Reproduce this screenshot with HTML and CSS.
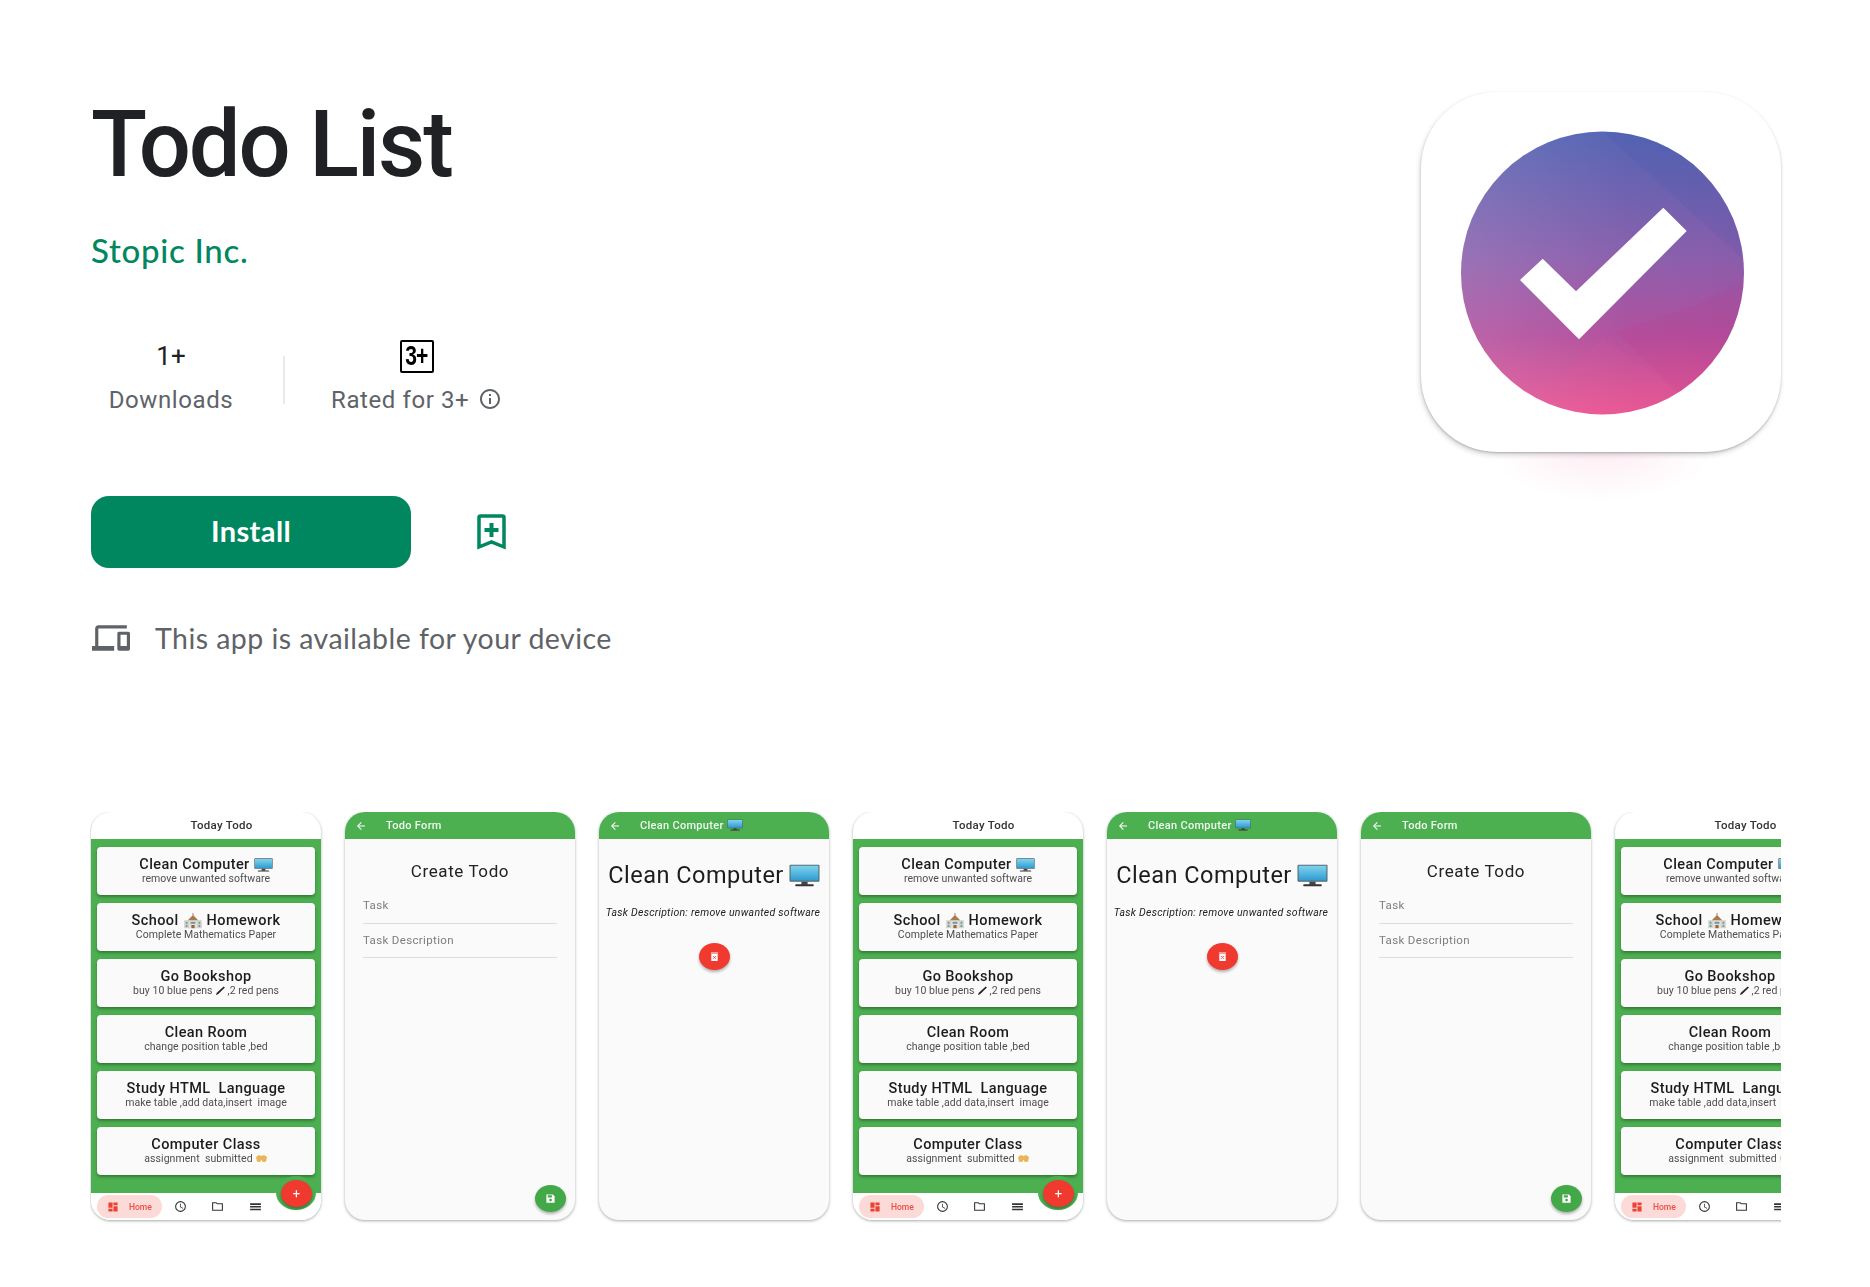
FILE: index.html
```html
<!DOCTYPE html>
<html lang="en">
<head>
<meta charset="utf-8">
<title>Todo List</title>
<link rel="stylesheet" href="styles.css">
</head>
<body>
<svg class="defs" aria-hidden="true">
  <defs>
    <linearGradient id="scr" x1="0" y1="0" x2="0" y2="1"><stop offset="0" stop-color="#7fd3ee"/><stop offset="1" stop-color="#2f9bd0"/></linearGradient>
    <linearGradient id="disc" x1="0" y1="0" x2="0" y2="1"><stop offset="0" stop-color="#5161b2"/><stop offset=".45" stop-color="#8a5dab"/><stop offset=".72" stop-color="#b14d9c"/><stop offset="1" stop-color="#ea5492"/></linearGradient>
    <linearGradient id="sheen" x1="0" y1="0" x2="1" y2="0"><stop offset="0" stop-color="#fff" stop-opacity=".13"/><stop offset=".6" stop-color="#fff" stop-opacity=".02"/><stop offset="1" stop-color="#fff" stop-opacity="0"/></linearGradient>
    <clipPath id="discClip"><circle cx="181.5" cy="181" r="141.5"/></clipPath>
    <symbol id="monitor" viewBox="0 0 30 22"><rect x="0.5" y="0.5" width="29" height="16.5" rx="1" fill="#55636b"/><rect x="1.5" y="1.5" width="27" height="14.500" fill="url(#scr)"/><rect x="12" y="17" width="6" height="3" fill="#444"/><rect x="6" y="19.500" width="18" height="1.800" rx=".9" fill="#333"/></symbol>
    <symbol id="school" viewBox="0 0 24 20"><rect x="1" y="9" width="22" height="10" fill="#d8d2c4"/><path d="M7 9 12 3l5 6v10H7z" fill="#e8dfcf"/><path d="M5.500 9 12 2.500 18.500 9z" fill="#a9794f"/><rect x="11.500" y="0" width="1" height="3" fill="#c0463c"/><rect x="3" y="11" width="2" height="2.500" fill="#5e9cc7"/><rect x="19" y="11" width="2" height="2.500" fill="#5e9cc7"/><rect x="3" y="15" width="2" height="2.500" fill="#5e9cc7"/><rect x="19" y="15" width="2" height="2.500" fill="#5e9cc7"/><rect x="9" y="11" width="6" height="2.500" fill="#5e9cc7"/><rect x="10" y="15" width="4" height="4" fill="#8c6b4a"/></symbol>
    <symbol id="pen" viewBox="0 0 12 12"><path d="M1 11 2 8.500 9.500 1.500 10.800 2.700 3.300 10z" fill="#222"/></symbol>
    <symbol id="hands" viewBox="0 0 14 10"><path d="M1 3.500C3 1 6 1 7 2.500 8 1 11 1 13 3.500L12 8.500 8.500 9 7 6.500 5.500 9 2 8.500z" fill="#e8b658"/></symbol>
    <symbol id="back" viewBox="0 0 24 24"><path d="M20 11H7.830l5.590-5.590L12 4l-8 8 8 8 1.410-1.410L7.830 13H20z"/></symbol>
    <symbol id="grid" viewBox="0 0 24 24"><path d="M1 1h10v13H1zM13 1h10v7H13zM13 10h10v13H13zM1 16h10v7H1z"/></symbol>
    <symbol id="clock" viewBox="0 0 24 24"><path d="M12 2a10 10 0 1 0 0 20 10 10 0 0 0 0-20zm0 18a8 8 0 1 1 0-16 8 8 0 0 1 0 16zm.5-13H11v6l5.250 3.150.750-1.230-4.500-2.670z"/></symbol>
    <symbol id="folder" viewBox="0 0 24 24"><path d="M10 4H2v16h20V6H12zm10 14H4V6h5.200l2 2H20z"/></symbol>
    <symbol id="menu" viewBox="0 0 24 24"><path d="M2 6h20v3H2zM2 11h20v3H2zM2 16h20v3H2z"/></symbol>
    <symbol id="trash" viewBox="0 0 24 24"><path d="M5 6h14v16H5zM4 3h16v2H4z"/><path d="m9 11 6 6m0-6-6 6" stroke="#f44336" stroke-width="2"/></symbol>
    <symbol id="save" viewBox="0 0 24 24"><path d="M17 3H3v18h18V7zM6 5h9v5H6z"/><circle cx="12" cy="15.500" r="3" fill="#43a847"/></symbol>
  </defs>
</svg>

<main class="page">
  <section class="hero">
    <div class="hero-info">
      <h1 class="app-title">Todo List</h1>
      <a class="developer">Stopic Inc.</a>
      <div class="stats">
        <div class="stat stat-downloads">
          <div class="stat-top">1+</div>
          <div class="stat-label">Downloads</div>
        </div>
        <div class="stat-divider"></div>
        <div class="stat stat-rating">
          <div class="stat-top"><span class="rating-box"><span class="rating-text">3+</span></span></div>
          <div class="stat-label">Rated for 3+
            <svg class="info-icon" viewBox="0 0 24 24"><path d="M11 7h2v2h-2zm0 4h2v6h-2zm1-9C6.480 2 2 6.480 2 12s4.480 10 10 10 10-4.480 10-10S17.520 2 12 2zm0 18c-4.410 0-8-3.590-8-8s3.590-8 8-8 8 3.590 8 8-3.590 8-8 8z"/></svg>
          </div>
        </div>
      </div>
      <div class="actions">
        <button class="install">Install</button>
        <svg class="bookmark" viewBox="0 0 29 37"><path d="M3.500 2h22a1.500 1.500 0 0 1 1.500 1.500v29.500L14.500 28 2 33V3.500A1.500 1.500 0 0 1 3.500 2z" fill="none" stroke="#01875f" stroke-width="3.500"/><path d="M12.500 9h4v5h5v4h-5v5h-4v-5h-5v-4h5z" fill="#01875f"/></svg>
      </div>
      <div class="device-note">
        <svg class="device-icon" viewBox="0 0 24 24"><path d="M4 6h18V4H4c-1.100 0-2 .9-2 2v11H0v3h14v-3H4V6zm19 2h-6c-.55 0-1 .45-1 1v10c0 .55.45 1 1 1h6c.55 0 1-.45 1-1V9c0-.55-.45-1-1-1zm-1 9h-4v-7h4v7z"/></svg>
        <span>This app is available for your device</span>
      </div>
    </div>
    <div class="app-icon">
      <svg viewBox="0 0 360 360" class="app-icon-art">
        <circle cx="181.500" cy="181" r="141.500" fill="url(#disc)"/>
        <g clip-path="url(#discClip)">
          <rect x="40" y="40" width="283" height="283" fill="url(#sheen)"/>
          <path d="M182 40 320 165 345 40z" fill="#3f57ad" opacity=".13"/>
          <path d="M195 240 262 305 330 240 330 185 270 215z" fill="#c8327f" opacity=".1"/>
          <path d="M130 300 182 245 262 305 182 330z" fill="#f0649f" opacity=".08"/>
        </g>
        <path d="M242.300 115.700 265.700 139 158 247.300 99 188 121.700 166.700 155 199.300z" fill="#fff"/>
      </svg>
    </div>
  </section>

  <section class="shots">
    <div class="phone">
      <div class="plain-bar">Today Todo</div>
      <div class="board">
        <div class="card"><div class="card-title">Clean Computer <svg class="emoji e-monitor"><use href="#monitor"/></svg></div><div class="card-sub">remove unwanted software</div></div>
        <div class="card"><div class="card-title">School <svg class="emoji e-school"><use href="#school"/></svg> Homework</div><div class="card-sub">Complete Mathematics Paper</div></div>
        <div class="card"><div class="card-title">Go Bookshop</div><div class="card-sub">buy 10 blue pens <svg class="emoji e-pen"><use href="#pen"/></svg>,2 red pens</div></div>
        <div class="card"><div class="card-title">Clean Room</div><div class="card-sub">change position table ,bed</div></div>
        <div class="card"><div class="card-title">Study HTML&nbsp; Language</div><div class="card-sub">make table ,add data,insert&nbsp; image</div></div>
        <div class="card"><div class="card-title">Computer Class</div><div class="card-sub">assignment&nbsp; submitted <svg class="emoji e-hands"><use href="#hands"/></svg></div></div>
      </div>
      <nav class="tabs">
        <div class="tab-home"><svg class="tab-grid"><use href="#grid"/></svg><span>Home</span></div>
        <svg class="tab-icon i-clock"><use href="#clock"/></svg>
        <svg class="tab-icon i-folder"><use href="#folder"/></svg>
        <svg class="tab-icon i-menu"><use href="#menu"/></svg>
      </nav>
      <div class="notch"></div>
      <div class="fab fab-add">+</div>
    </div>

    <div class="phone phone-light">
      <div class="green-bar"><svg class="back"><use href="#back"/></svg><span>Todo Form</span></div>
      <div class="form">
        <div class="form-title">Create Todo</div>
        <div class="field">Task</div>
        <div class="field">Task Description</div>
      </div>
      <div class="fab fab-save"><svg class="fab-glyph"><use href="#save"/></svg></div>
    </div>

    <div class="phone phone-light">
      <div class="green-bar"><svg class="back"><use href="#back"/></svg><span>Clean Computer <svg class="emoji e-monitor-s"><use href="#monitor"/></svg></span></div>
      <div class="detail">
        <div class="detail-title">Clean Computer <svg class="emoji e-monitor-l"><use href="#monitor"/></svg></div>
        <div class="detail-desc">Task Description: remove unwanted software</div>
        <div class="fab fab-delete"><svg class="fab-glyph"><use href="#trash"/></svg></div>
      </div>
    </div>

    <div class="phone">
      <div class="plain-bar">Today Todo</div>
      <div class="board">
        <div class="card"><div class="card-title">Clean Computer <svg class="emoji e-monitor"><use href="#monitor"/></svg></div><div class="card-sub">remove unwanted software</div></div>
        <div class="card"><div class="card-title">School <svg class="emoji e-school"><use href="#school"/></svg> Homework</div><div class="card-sub">Complete Mathematics Paper</div></div>
        <div class="card"><div class="card-title">Go Bookshop</div><div class="card-sub">buy 10 blue pens <svg class="emoji e-pen"><use href="#pen"/></svg>,2 red pens</div></div>
        <div class="card"><div class="card-title">Clean Room</div><div class="card-sub">change position table ,bed</div></div>
        <div class="card"><div class="card-title">Study HTML&nbsp; Language</div><div class="card-sub">make table ,add data,insert&nbsp; image</div></div>
        <div class="card"><div class="card-title">Computer Class</div><div class="card-sub">assignment&nbsp; submitted <svg class="emoji e-hands"><use href="#hands"/></svg></div></div>
      </div>
      <nav class="tabs">
        <div class="tab-home"><svg class="tab-grid"><use href="#grid"/></svg><span>Home</span></div>
        <svg class="tab-icon i-clock"><use href="#clock"/></svg>
        <svg class="tab-icon i-folder"><use href="#folder"/></svg>
        <svg class="tab-icon i-menu"><use href="#menu"/></svg>
      </nav>
      <div class="notch"></div>
      <div class="fab fab-add">+</div>
    </div>

    <div class="phone phone-light">
      <div class="green-bar"><svg class="back"><use href="#back"/></svg><span>Clean Computer <svg class="emoji e-monitor-s"><use href="#monitor"/></svg></span></div>
      <div class="detail">
        <div class="detail-title">Clean Computer <svg class="emoji e-monitor-l"><use href="#monitor"/></svg></div>
        <div class="detail-desc">Task Description: remove unwanted software</div>
        <div class="fab fab-delete"><svg class="fab-glyph"><use href="#trash"/></svg></div>
      </div>
    </div>

    <div class="phone phone-light">
      <div class="green-bar"><svg class="back"><use href="#back"/></svg><span>Todo Form</span></div>
      <div class="form">
        <div class="form-title">Create Todo</div>
        <div class="field">Task</div>
        <div class="field">Task Description</div>
      </div>
      <div class="fab fab-save"><svg class="fab-glyph"><use href="#save"/></svg></div>
    </div>

    <div class="phone">
      <div class="plain-bar">Today Todo</div>
      <div class="board">
        <div class="card"><div class="card-title">Clean Computer <svg class="emoji e-monitor"><use href="#monitor"/></svg></div><div class="card-sub">remove unwanted software</div></div>
        <div class="card"><div class="card-title">School <svg class="emoji e-school"><use href="#school"/></svg> Homework</div><div class="card-sub">Complete Mathematics Paper</div></div>
        <div class="card"><div class="card-title">Go Bookshop</div><div class="card-sub">buy 10 blue pens <svg class="emoji e-pen"><use href="#pen"/></svg>,2 red pens</div></div>
        <div class="card"><div class="card-title">Clean Room</div><div class="card-sub">change position table ,bed</div></div>
        <div class="card"><div class="card-title">Study HTML&nbsp; Language</div><div class="card-sub">make table ,add data,insert&nbsp; image</div></div>
        <div class="card"><div class="card-title">Computer Class</div><div class="card-sub">assignment&nbsp; submitted <svg class="emoji e-hands"><use href="#hands"/></svg></div></div>
      </div>
      <nav class="tabs">
        <div class="tab-home"><svg class="tab-grid"><use href="#grid"/></svg><span>Home</span></div>
        <svg class="tab-icon i-clock"><use href="#clock"/></svg>
        <svg class="tab-icon i-folder"><use href="#folder"/></svg>
        <svg class="tab-icon i-menu"><use href="#menu"/></svg>
      </nav>
      <div class="notch"></div>
      <div class="fab fab-add">+</div>
    </div>
  </section>
</main>
</body>
</html>
```
FILE: styles.css
```css
* { box-sizing: border-box; }
html, body { margin: 0; background: #fff; }
body { font-family: Roboto, "Liberation Sans", sans-serif; color: #202124; width: 1870px; height: 1287px; overflow: hidden; }
.defs { width: 0; height: 0; position: absolute; }
.page { padding: 92px 89px 0 91px; }

.hero { display: flex; justify-content: space-between; align-items: flex-start; height: 720px; }
.hero-info { display: flex; flex-direction: column; margin-top: -2px; }
.app-title { margin: 0; font-size: 92px; font-weight: 500; line-height: 110px; color: #202124; letter-spacing: -2.150px; }
.developer { margin-top: 30px; font-family: Lato, "Open Sans", sans-serif; font-size: 33px; line-height: 40px; color: #01875f; font-weight: 500; letter-spacing: .7px; }

.stats { display: flex; align-items: center; margin-top: 68px; }
.stat { display: flex; flex-direction: column; align-items: center; }
.stat-downloads { width: 160px; }
.stat-rating { margin-left: 46px; }
.stat-top { height: 36px; display: flex; align-items: center; justify-content: center; font-size: 26px; color: #202124; }
.stat-label { margin-top: 10px; display: flex; align-items: center; gap: 9px; font-size: 24px; line-height: 32px; color: #5f6368; letter-spacing: .6px; }
.stat-divider { width: 2px; height: 48px; background: #e8eaed; margin-left: 32px; margin-top: 6px; }
.rating-box { width: 34px; height: 33px; border: 2px solid #000; border-radius: 2px; display: flex; align-items: center; justify-content: center; }
.rating-text { display: inline-block; transform: scaleX(.78); font-family: "Liberation Sans", sans-serif; font-weight: 700; font-size: 27px; color: #000; letter-spacing: -1px; }
.info-icon { width: 24px; height: 24px; fill: #5f6368; margin-top: -2px; }

.actions { display: flex; align-items: center; margin-top: 80px; }
.install { width: 320px; height: 72px; border: 0; border-radius: 18px; background: #01875f; color: #fff; font-family: Lato, "Open Sans", sans-serif; font-size: 29px; font-weight: 700; letter-spacing: .4px; padding: 0 0 4px; }
.bookmark { width: 29px; height: 37px; margin-left: 66px; }

.device-note { display: flex; align-items: center; gap: 25px; margin-top: 50px; font-family: Lato, "Open Sans", sans-serif; font-size: 28.500px; line-height: 40px; color: #5f6368; letter-spacing: .45px; }
.device-icon { width: 38px; height: 38px; fill: #5f6368; margin-left: 1px; }

.app-icon { position: relative; width: 360px; height: 360px; background: #fff; border-radius: 76px; box-shadow: 0 1px 2px rgba(60,64,67,.25), -1px 3px 5px rgba(60,64,67,.22); }
.app-icon::after { content: ""; position: absolute; left: 70px; right: 70px; top: 360px; height: 50px; background: radial-gradient(ellipse at 50% 0, rgba(233,84,146,.1), rgba(233,84,146,0) 70%); }
.app-icon-art { display: block; width: 360px; height: 360px; }

.shots { display: flex; gap: 24px; overflow: hidden; padding-bottom: 12px; height: 422px; padding-left: 1px; margin-left: -1px; }
.phone { position: relative; flex: none; width: 230px; height: 408px; border-radius: 20px; overflow: hidden; background: #fff; box-shadow: 0 1px 3px rgba(60,64,67,.45); display: flex; flex-direction: column; filter: blur(.35px); }
.phone-light { background: #fafafa; }

.plain-bar { height: 27px; line-height: 27px; padding-left: 31px; text-align: center; font-size: 11.500px; font-weight: 500; color: #333; letter-spacing: .25px; }
.board { flex: 1; background: #4caf50; padding: 8px 6px 0; display: flex; flex-direction: column; gap: 8px; }
.card { height: 48px; background: #fafafa; border-radius: 4px; box-shadow: 0 2px 3px rgba(0,0,0,.3); text-align: center; padding-top: 10px; }
.card-title { font-size: 14.500px; line-height: 16px; font-weight: 500; color: #1c1c1c; letter-spacing: .4px; white-space: nowrap; display: flex; align-items: center; justify-content: center; gap: 4px; }
.card-sub { font-size: 10.500px; line-height: 13px; margin-top: -1px; color: #4e4e4e; letter-spacing: .05px; white-space: nowrap; display: flex; align-items: center; justify-content: center; gap: 2px; }
.emoji { display: inline-block; flex: none; vertical-align: middle; }
.e-monitor { width: 19px; height: 14px; }
.e-school { width: 20px; height: 16px; }
.e-pen { width: 11px; height: 11px; }
.e-hands { width: 13px; height: 9px; }
.e-monitor-s { width: 16px; height: 12px; vertical-align: -2px; }
.e-monitor-l { width: 31px; height: 23px; }

.tabs { height: 27px; background: #fff; display: flex; align-items: center; padding-left: 6px; flex: none; }
.tab-home { width: 65px; height: 23px; background: #fcdad7; border-radius: 12px; display: flex; align-items: center; padding-left: 11px; gap: 11px; color: #ea4f45; font-size: 8.500px; font-weight: 500; }
.tab-grid { width: 10px; height: 10px; fill: #ea4335; }
.tab-icon { width: 13px; height: 13px; fill: #333; }
.i-clock { margin-left: 12px; }
.i-folder { margin-left: 24px; }
.i-menu { margin-left: 25px; }

.notch { position: absolute; left: 185px; top: 364px; width: 40px; height: 34px; border-radius: 50%; background: #4caf50; }
.fab { position: absolute; width: 31px; height: 27px; border-radius: 50%; display: flex; align-items: center; justify-content: center; color: #fff; box-shadow: 0 2px 3px rgba(0,0,0,.3); }
.fab-add { left: 190px; top: 368px; background: #f0392f; font-size: 13px; }
.fab-save { left: 190px; top: 373px; background: #43a847; }
.fab-delete { left: 100px; top: 104px; background: #f0392f; }
.fab-glyph { width: 11px; height: 11px; fill: #fff; }

.green-bar { height: 27px; background: #4caf50; color: #f1f8f1; display: flex; align-items: center; padding-left: 10px; font-size: 11px; font-weight: 500; letter-spacing: .3px; flex: none; white-space: nowrap; }
.back { width: 12px; height: 12px; fill: #fff; margin-right: 19px; }
.form { padding: 21px 18px 0; }
.form-title { font-size: 17px; line-height: 22px; text-align: center; color: #222; letter-spacing: .6px; }
.field { height: 34px; padding-top: 10px; font-size: 11.500px; line-height: 13px; color: #7d7d7d; letter-spacing: .35px; border-bottom: 1px solid #dcdcdc; }
.form-title + .field { height: 42px; padding-top: 17px; }

.detail { flex: 1; position: relative; padding-top: 22px; text-align: center; }
.detail-title { font-size: 23.500px; line-height: 28px; color: #1c1c1c; letter-spacing: .5px; display: flex; align-items: center; justify-content: center; gap: 5px; white-space: nowrap; }
.detail-desc { margin-top: 17px; margin-left: -2px; font-size: 10.500px; line-height: 13px; font-style: italic; color: #222; letter-spacing: .25px; white-space: nowrap; }
```
